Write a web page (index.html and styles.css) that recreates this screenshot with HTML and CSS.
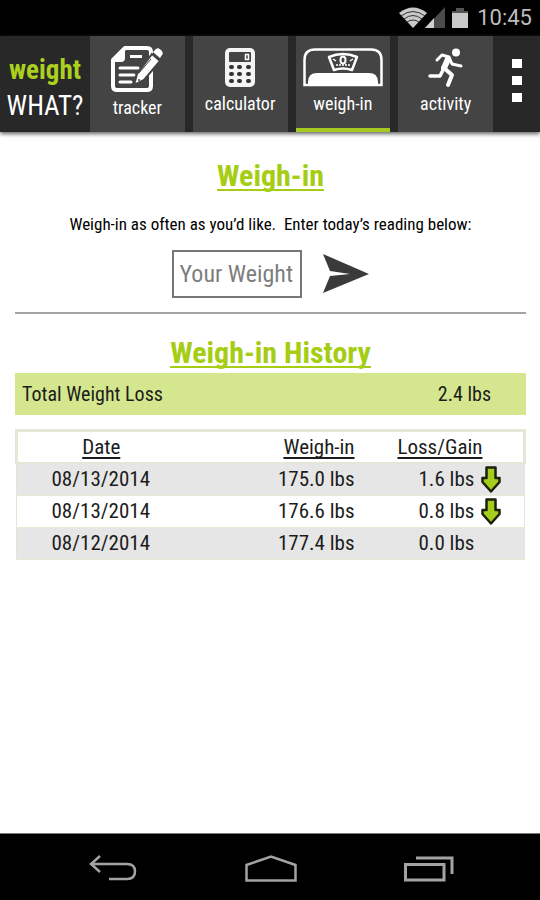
FILE: index.html
```html
<!DOCTYPE html>
<html lang="en">
<head>
<meta charset="utf-8">
<meta name="viewport" content="width=device-width, initial-scale=1">
<title>Weigh-in</title>
<link rel="stylesheet" href="styles.css">
</head>
<body>
<div class="status">
  <svg class="status-icons" width="70" height="22" viewBox="0 0 70 22" aria-hidden="true">
    <path d="M0 6Q14-5 28 6L14 21Z" fill="#c9c9c9"/>
    <g fill="none" stroke="#333" stroke-width="1"><path d="M2 9Q14 0 26 9"/><path d="M5 12Q14 5 23 12"/><path d="M8 15Q14 11 20 15"/></g>
    <path d="M26 21L46 0V21Z" fill="#4b4b4b"/><path d="M26 21L35 11V21Z" fill="#d0d0d0"/>
    <path d="M57 1h8v3h4v17H53V4h4Z" fill="#555"/><path d="M53 6h16v15H53Z" fill="#c9c9c9"/>
  </svg>
  <time class="clock">10:45</time>
</div>
<header class="bar">
  <a class="brand" href="#"><span class="brand-top">weight</span><span>WHAT?</span></a>
  <nav class="tabs">
    <a class="tab" href="#tracker">
      <svg width="54" height="52" viewBox="0 0 54 52" aria-hidden="true">
        <path d="M14 4H36Q40 4 40 8V42Q40 46 36 46H6Q2 46 2 42V16Z" transform="translate(1 0)" fill="none" stroke="#fff" stroke-width="4" stroke-linejoin="round"/>
        <path d="M2 18L15 3V14Q15 18 11 18Z" fill="#fff"/>
        <path d="M20 11H32V14H20Z" fill="#fff"/>
        <g stroke="#fff" stroke-width="3" stroke-linecap="round"><path d="M10 24H28M10 31H24M10 38H21"/></g>
        <path d="M42 10L50 17L34 36L24 41L27 30Z" fill="#fff" stroke="#444" stroke-width="2"/>
        <path d="M43 8L46 5Q48 3 51 6Q54 9 52 11L50 14Z" fill="#fff"/>
        <path d="M29 29L41 15" stroke="#444" stroke-width="1"/>
        <circle cx="29" cy="36" r="1" fill="#444"/>
      </svg>
      <span>tracker</span>
    </a>
    <a class="tab" href="#calculator">
      <svg width="30" height="40" viewBox="0 0 30 40" aria-hidden="true">
        <rect width="30" height="39" rx="5" fill="#f4f4f4"/>
        <rect x="4" y="4" width="22" height="10" rx="1" fill="#444"/>
        <path d="M20.500 6.500h3v5h-3Z" fill="none" stroke="#fff" stroke-width="1.500"/>
        <g fill="#333"><rect x="4" y="17" width="5" height="4" rx="2"/><rect x="12" y="17" width="5" height="4" rx="2"/><rect x="21" y="17" width="5" height="4" rx="2"/><rect x="4" y="24" width="5" height="4" rx="2"/><rect x="12" y="24" width="5" height="4" rx="2"/><rect x="21" y="24" width="5" height="4" rx="2"/><rect x="4" y="31" width="5" height="4" rx="2"/><rect x="12" y="31" width="5" height="4" rx="2"/><rect x="21" y="31" width="5" height="4" rx="2"/></g>
      </svg>
      <span>calculator</span>
    </a>
    <a class="tab tab-active" href="#weigh-in" aria-current="page">
      <svg width="80" height="40" viewBox="0 0 80 40" aria-hidden="true">
        <path d="M1.500 37V12Q1.500 1.500 12 1.500H68Q78.500 1.500 78.500 12V37Z" fill="none" stroke="#fff" stroke-width="2.500"/>
        <path d="M5 38V34Q5 25 14 25H66Q75 25 75 34V38Z" fill="#fff"/>
        <path d="M26 9Q40 3 54 9L49 22Q40 19 31 22Z" fill="none" stroke="#fff" stroke-width="2.500" stroke-linejoin="round"/>
        <ellipse cx="40" cy="12" rx="2.500" ry="3.500" fill="none" stroke="#fff" stroke-width="2"/>
        <path d="M30 11L33 13M50 11L47 13M34 18V16M37 18V16M43 18V16M46 18V16M40 18V16" stroke="#fff" stroke-width="1.500"/>
      </svg>
      <span>weigh-in</span>
    </a>
    <a class="tab" href="#activity">
      <svg width="36" height="40" viewBox="0 0 36 40" aria-hidden="true">
        <circle cx="28" cy="4.500" r="4" fill="#fff"/>
        <g fill="none" stroke="#fff" stroke-linecap="round" stroke-linejoin="round"><path d="M9 12L14 7L21 9L24 16L33 18" stroke-width="3"/><path d="M21 11L16 20L24 27L20 37" stroke-width="4"/><path d="M15 22L12 28H2" stroke-width="3.500"/><path d="M20 11L16 20" stroke-width="6"/></g>
      </svg>
      <span>activity</span>
    </a>
  </nav>
  <button class="menu" type="button" aria-label="Menu"><i></i><i></i><i></i></button>
</header>
<main class="page">
  <h1 class="title">Weigh-in</h1>
  <form class="entry">
    <label class="hint" for="w">Weigh-in as often as you’d like.&nbsp; Enter today’s reading below:</label>
    <div class="entry-row">
      <input class="weight" id="w" type="text" inputmode="decimal" placeholder="Your Weight">
      <button class="send" type="button" aria-label="Send">
        <svg width="48" height="40" viewBox="0 0 48 40" aria-hidden="true"><path d="M1 0L47 20L1 39L8 22L28 20L8 17Z" fill="#3a3a3a"/></svg>
      </button>
    </div>
  </form>
  <h2 class="title">Weigh-in History</h2>
  <div class="total"><span>Total Weight Loss</span><span>2.4 lbs</span></div>
  <table class="history">
    <thead><tr><th>Date</th><th class="num">Weigh-in</th><th class="change">Loss/Gain</th></tr></thead>
    <tbody>
      <tr><td>08/13/2014</td><td class="num">175.0 lbs</td><td class="change"><div class="delta">1.6 lbs<svg width="20" height="27" viewBox="0 0 20 27" aria-hidden="true"><path d="M5.500 1.500H14.500V12H18.500V16L10 25.500L1.500 16V12H5.500Z" fill="#a4cd1b" stroke="#1c1f0a" stroke-width="2.500" stroke-linejoin="round"/></svg></div></td></tr>
      <tr><td>08/13/2014</td><td class="num">176.6 lbs</td><td class="change"><div class="delta">0.8 lbs<svg width="20" height="27" viewBox="0 0 20 27" aria-hidden="true"><path d="M5.500 1.500H14.500V12H18.500V16L10 25.500L1.500 16V12H5.500Z" fill="#a4cd1b" stroke="#1c1f0a" stroke-width="2.500" stroke-linejoin="round"/></svg></div></td></tr>
      <tr><td>08/12/2014</td><td class="num">177.4 lbs</td><td class="change"><div class="delta">0.0 lbs</div></td></tr>
    </tbody>
  </table>
</main>
<footer class="system">
  <button type="button" aria-label="Back"><svg width="48" height="28" viewBox="0 0 48 28"><path d="M11 1L2 9L11 17M2 9H38Q46 9 46 16.500T38 24H20" fill="none" stroke="#a3a3a3" stroke-width="2.500"/></svg></button>
  <button type="button" aria-label="Home"><svg width="52" height="28" viewBox="0 0 52 28"><path d="M1.500 25.500V10L26 1.500L50.500 10V25.500Z" fill="none" stroke="#a3a3a3" stroke-width="2.500"/></svg></button>
  <button type="button" aria-label="Recent apps"><svg width="50" height="28" viewBox="0 0 50 28"><path d="M1.500 9.500H40V25H1.500ZM12 3H48V19" fill="none" stroke="#a3a3a3" stroke-width="3"/></svg></button>
</footer>
</body>
</html>
```
FILE: styles.css
```css
* { box-sizing: border-box; }

body {
  display: flex;
  flex-direction: column;
  min-height: 100vh;
  margin: 0;
  background: #fff;
  color: #1c1c1c;
  font-family: "Roboto Condensed", "Liberation Sans Narrow", Roboto, sans-serif;
}

a { color: inherit; text-decoration: none; }
button { padding: 0; border: 0; background: none; }
svg { display: block; }

.status {
  display: flex;
  align-items: center;
  justify-content: flex-end;
  gap: 8px;
  height: 36px;
  padding-right: 8px;
  background: #000;
}

.clock {
  color: #bdbdbd;
  font: 22px/36px Roboto, sans-serif;
}

.bar {
  display: flex;
  height: 96px;
  background: #282828;
  color: #fff;
  box-shadow: 0 2px 4px #666;
}

.brand {
  display: flex;
  flex-direction: column;
  align-items: center;
  width: 90px;
  padding-top: 16px;
  font-size: 27px;
  line-height: 36px;
}

.brand-top { color: #abd01e; font-weight: 700; }

.tabs { display: flex; flex: 1; gap: 8px; }

.tab {
  display: flex;
  flex: 1 1 0;
  flex-direction: column;
  align-items: center;
  justify-content: flex-end;
  gap: 4px;
  padding-bottom: 12px;
  border-bottom: 4px solid #444;
  background: #444;
  font-size: 18px;
  line-height: 24px;
}

.tab:first-child { gap: 0; padding-bottom: 8px; }
.tab-active { border-bottom-color: #a6ca22; }

.menu {
  display: flex;
  flex-direction: column;
  align-items: center;
  gap: 8px;
  width: 47px;
  padding-top: 23px;
}

.menu i { width: 10px; height: 9px; background: #fff; }

.page { flex: 1; padding: 24px 14px 24px 15px; }

.title {
  margin: 0;
  color: #a4cd14;
  font-size: 30px;
  line-height: 40px;
  text-align: center;
  text-decoration: underline;
  text-decoration-thickness: 2px;
  text-underline-offset: 3px;
  text-decoration-skip-ink: none;
}

.entry {
  display: flex;
  flex-direction: column;
  align-items: center;
  gap: 14px;
  margin-bottom: 19px;
  padding: 16px 0 14px;
  border-bottom: 2px solid #a3a3a3;
}

.hint { color: #000; font-size: 17px; line-height: 24px; }

.entry-row { display: flex; align-items: center; gap: 20px; }

.weight {
  width: 130px;
  height: 48px;
  padding: 0 6px;
  border: 2px solid #777;
  border-radius: 0;
  font: inherit;
  font-size: 24px;
}

.weight::placeholder { color: #7d7d7d; opacity: 1; }

.total {
  display: flex;
  justify-content: space-between;
  padding: 0 35px 0 7px;
  background: #d4e78e;
  font-size: 20px;
  line-height: 42px;
}

.history {
  width: 100%;
  margin-top: 14px;
  border: 1px solid #e3e6d2;
  border-collapse: collapse;
  table-layout: fixed;
  font-size: 21px;
  line-height: 30px;
}

.history th, .history td { height: 32px; padding: 0; text-align: center; font-weight: 400; }
.history th { border: 0 solid #e5e8d8; border-width: 3px 0 2px; text-decoration: underline; text-underline-offset: 3px; text-decoration-skip-ink: none; }
.history th:first-child { width: 168px; border-left-width: 3px; }
.history th:last-child { border-right-width: 3px; }
.history tbody tr { border-bottom: 1px solid #e9ecd0; }
.history tbody tr:nth-child(odd) { background: #e6e6e6; }
.history .num { text-align: right; }
.history .change { width: 170px; padding-left: 43px; text-align: left; }
.history .delta { display: flex; align-items: center; gap: 7px; padding-left: 21px; }

.system {
  display: flex;
  align-items: center;
  justify-content: space-between;
  height: 67px;
  padding: 4px 86px 0 89px;
  border-top: 1px solid #777;
  background: #000;
}
```
